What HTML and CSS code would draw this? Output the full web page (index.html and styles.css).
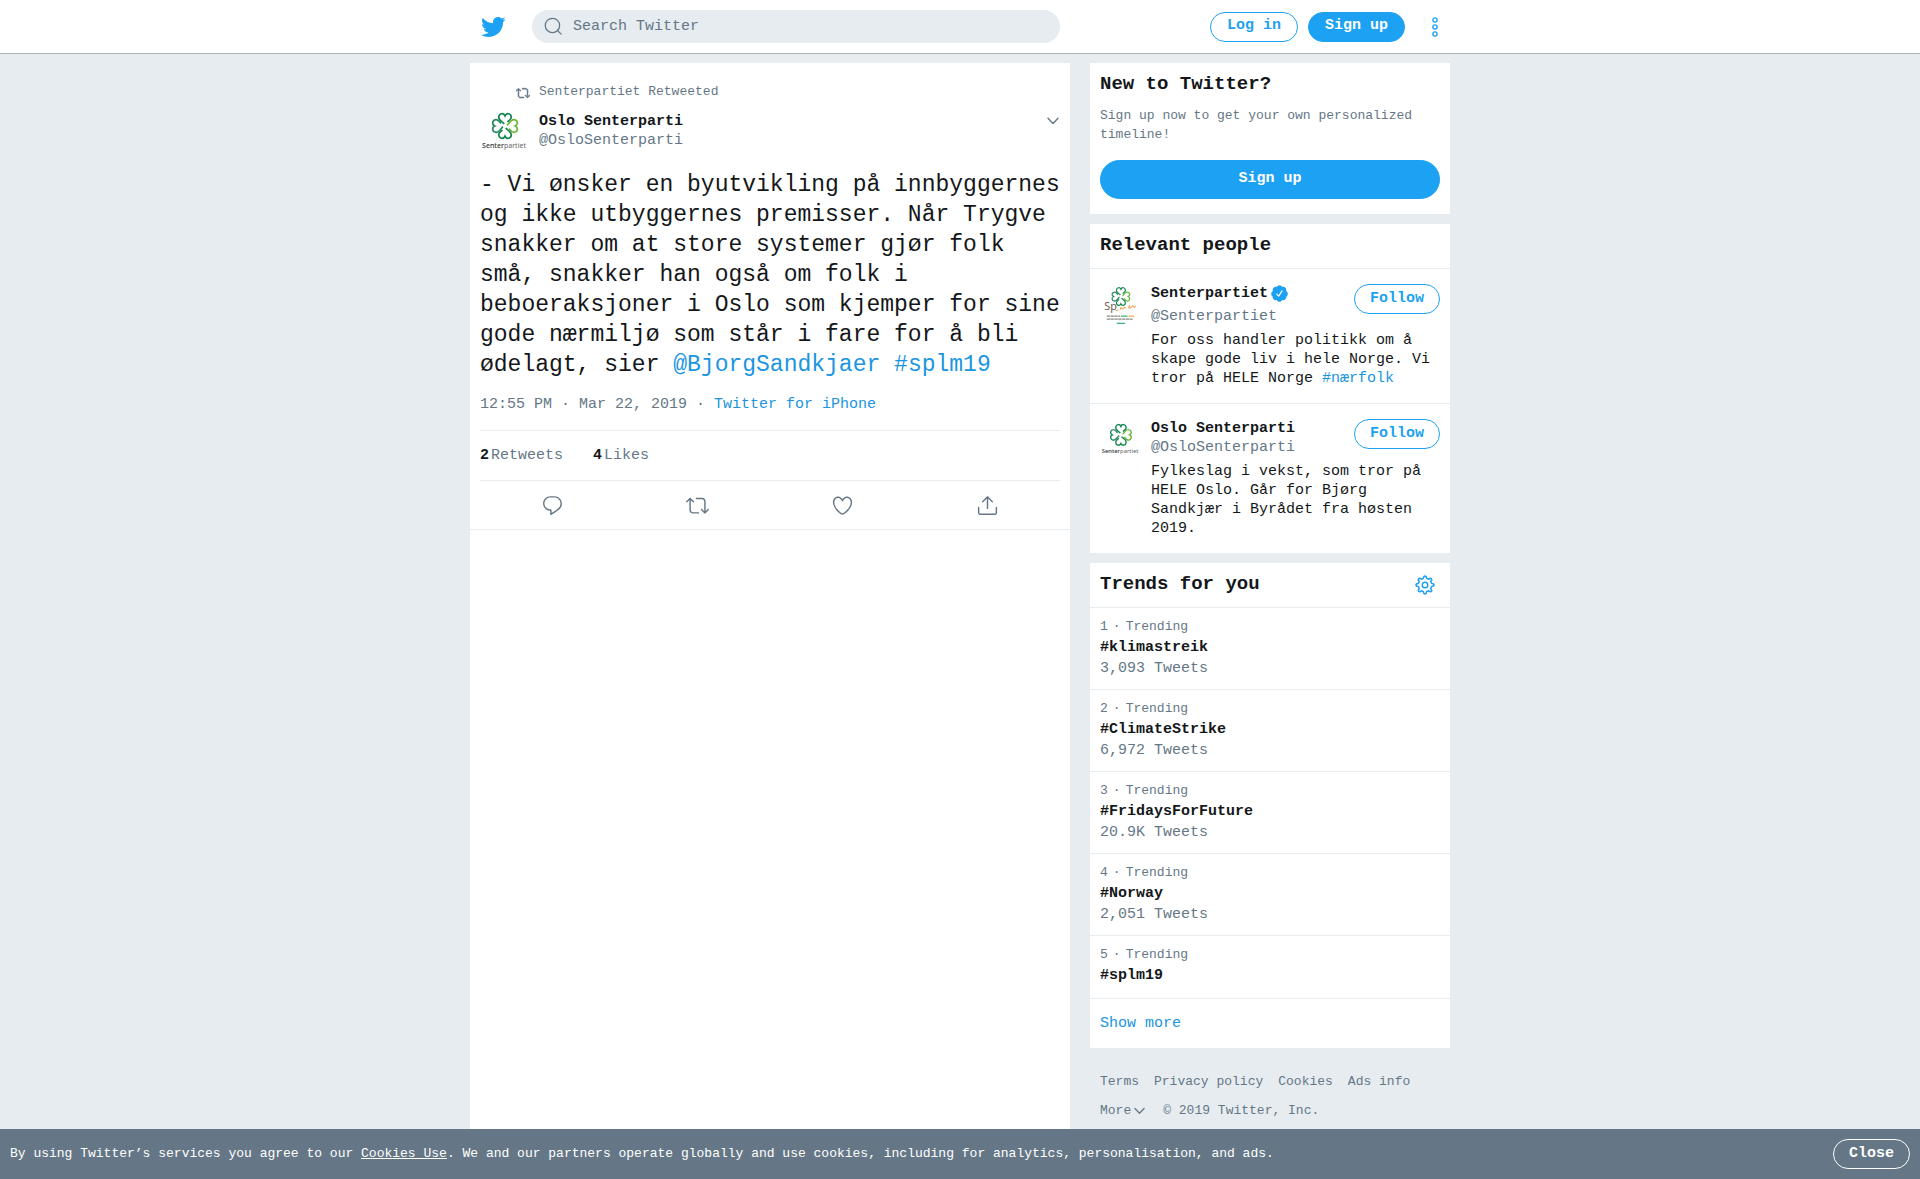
FILE: index.html
```html
<!DOCTYPE html>
<html lang="en">
<head>
<meta charset="utf-8">
<meta name="viewport" content="width=device-width, initial-scale=1">
<title>Oslo Senterparti on Twitter</title>
<link rel="stylesheet" href="styles.css">
</head>
<body>
<svg class="sprite" aria-hidden="true">
  <symbol id="clover" viewBox="-14 -14 28 28">
    <g fill="none" stroke-width="1.700">
      <path stroke="#0f8350" d="M-.8-2C-2-4-6.500-5.500-6.300-8.800C-6-12.800-1.500-13.600 0-10.200C1.500-13.600 6-12.800 6.300-8.800C6.400-6.500 3.500-5 2.500-4"/>
      <path stroke="#6cb83a" transform="rotate(90)" d="M-.8-2C-2-4-6.500-5.500-6.300-8.800C-6-12.800-1.500-13.600 0-10.200C1.500-13.600 6-12.800 6.300-8.800C6.400-6.500 3.500-5 2.500-4"/>
      <path stroke="#14884a" transform="rotate(180)" d="M-.8-2C-2-4-6.500-5.500-6.300-8.800C-6-12.800-1.500-13.600 0-10.200C1.500-13.600 6-12.800 6.300-8.800C6.400-6.500 3.500-5 2.500-4"/>
      <path stroke="#2a8a62" transform="rotate(270)" d="M-.8-2C-2-4-6.500-5.500-6.300-8.800C-6-12.800-1.500-13.600 0-10.200C1.500-13.600 6-12.800 6.300-8.800C6.400-6.500 3.500-5 2.500-4"/>
    </g>
  </symbol>
  <symbol id="retweet" viewBox="0 0 24 24">
    <path d="M23.77 15.67c-.292-.293-.767-.293-1.06 0l-2.22 2.22V7.65c0-2.068-1.683-3.75-3.75-3.75h-5.85c-.414 0-.75.336-.75.75s.336.75.75.75h5.85c1.24 0 2.25 1.01 2.25 2.25v10.24l-2.22-2.22c-.293-.293-.768-.293-1.06 0s-.294.768 0 1.06l3.5 3.5c.145.147.337.22.53.22s.383-.072.53-.22l3.5-3.5c.294-.292.294-.767 0-1.06zm-10.66 3.28H7.26c-1.24 0-2.25-1.01-2.25-2.25V6.46l2.22 2.22c.148.147.34.22.532.22s.384-.073.53-.22c.293-.293.293-.768 0-1.06l-3.5-3.5c-.293-.294-.768-.294-1.06 0l-3.5 3.5c-.294.292-.294.767 0 1.06s.767.293 1.06 0l2.22-2.22V16.7c0 2.068 1.683 3.75 3.75 3.75h5.85c.414 0 .75-.336.75-.75s-.337-.75-.75-.75z"/>
  </symbol>
  <symbol id="chevron" viewBox="0 0 12 8">
    <path d="M1 1.200l5 5.200l5-5.200" fill="none" stroke="currentColor" stroke-width="1.400" stroke-linecap="round" stroke-linejoin="round"/>
  </symbol>
</svg>

<header class="topbar">
  <div class="topbar-inner">
    <a class="logo" href="#" aria-label="Twitter">
      <svg class="bird" viewBox="0 0 24 24"><path d="M23.643 4.937c-.835.37-1.732.62-2.675.733.962-.576 1.7-1.49 2.048-2.578-.9.534-1.897.922-2.958 1.13-.85-.904-2.06-1.47-3.4-1.47-2.572 0-4.658 2.086-4.658 4.66 0 .364.042.718.12 1.06-3.873-.195-7.304-2.05-9.602-4.868-.4.69-.63 1.49-.63 2.342 0 1.616.823 3.043 2.072 3.878-.764-.025-1.482-.234-2.11-.583v.06c0 2.257 1.605 4.14 3.737 4.568-.392.106-.803.162-1.227.162-.3 0-.593-.028-.877-.082.593 1.85 2.313 3.198 4.352 3.234-1.595 1.25-3.604 1.995-5.786 1.995-.376 0-.747-.022-1.112-.065 2.062 1.323 4.51 2.093 7.14 2.093 8.57 0 13.255-7.098 13.255-13.254 0-.2-.005-.402-.014-.602.91-.658 1.7-1.477 2.323-2.41z"/></svg>
    </a>
    <form class="search" role="search">
      <label for="q" aria-label="Search">
        <svg class="icon-search" viewBox="0 0 18 18"><circle cx="8" cy="8" r="6.800"/><path d="M12.600 12.600l3.600 3.600"/></svg>
      </label>
      <input id="q" type="text" placeholder="Search Twitter">
    </form>
    <div class="session">
      <button class="btn" type="button">Log in</button>
      <button class="btn btn-solid" type="button">Sign up</button>
      <button class="btn-icon" type="button" aria-label="More options">
        <svg class="icon-dots" viewBox="0 0 20 20"><circle cx="10" cy="3" r="2.100"/><circle cx="10" cy="10" r="2.100"/><circle cx="10" cy="17" r="2.100"/></svg>
      </button>
    </div>
  </div>
</header>

<div class="page">
  <main class="primary">
    <article class="tweet">
      <div class="context"><svg class="icon-context"><use href="#retweet"/></svg><span>Senterpartiet Retweeted</span></div>
      <div class="author">
        <svg class="avatar-large" viewBox="0 0 49 49" role="img" aria-label="Oslo Senterparti">
          <use href="#clover" x="11" y="5" width="28" height="28"/>
          <text class="avatar-text" x="24" y="41" text-anchor="middle"><tspan class="avatar-bold">Senter</tspan>partiet</text>
        </svg>
        <div class="names"><a class="name" href="#">Oslo Senterparti</a><a class="handle" href="#">@OsloSenterparti</a></div>
        <button class="btn-menu" type="button" aria-label="More"><svg class="icon-menu"><use href="#chevron"/></svg></button>
      </div>
      <p class="tweet-text">- Vi ønsker en byutvikling på innbyggernes og ikke utbyggernes premisser. Når Trygve snakker om at store systemer gjør folk små, snakker han også om folk i beboeraksjoner i Oslo som kjemper for sine gode nærmiljø som står i fare for å bli ødelagt, sier <a href="#">@BjorgSandkjaer</a> <a href="#">#splm19</a></p>
      <p class="date">12:55 PM · Mar 22, 2019 · <a href="#">Twitter for iPhone</a></p>
      <div class="stats">
        <a class="stat" href="#"><strong>2</strong><span>Retweets</span></a>
        <a class="stat" href="#"><strong>4</strong><span>Likes</span></a>
      </div>
      <div class="actions">
        <button type="button" aria-label="Reply"><svg viewBox="0 0 24 24"><path d="M14.046 2.242l-4.148-.01h-.002c-4.374 0-7.8 3.427-7.8 7.802 0 4.098 3.186 7.206 7.465 7.37v3.828c0 .108.044.286.12.403.142.225.384.347.632.347.138 0 .277-.038.402-.118.264-.168 6.473-4.14 8.088-5.506 1.902-1.61 3.04-3.97 3.043-6.312v-.017c-.006-4.367-3.43-7.787-7.8-7.788zm3.787 12.972c-1.134.96-4.862 3.405-6.772 4.643V16.67c0-.414-.335-.75-.75-.75h-.396c-3.66 0-6.318-2.476-6.318-5.886 0-3.534 2.768-6.302 6.3-6.302l4.147.01h.002c3.532 0 6.3 2.766 6.302 6.296-.003 1.91-.942 3.844-2.514 5.176z"/></svg></button>
        <button type="button" aria-label="Retweet"><svg><use href="#retweet"/></svg></button>
        <button type="button" aria-label="Like"><svg viewBox="0 0 24 24"><path d="M12 21.638h-.014C9.403 21.59 1.95 14.856 1.95 8.478c0-3.064 2.525-5.754 5.403-5.754 2.29 0 3.83 1.58 4.646 2.73.814-1.148 2.354-2.73 4.645-2.73 2.88 0 5.404 2.69 5.404 5.755 0 6.376-7.454 13.11-10.037 13.157H12zM7.354 4.225c-2.08 0-3.903 1.988-3.903 4.255 0 5.74 7.034 11.596 8.55 11.658 1.518-.062 8.55-5.917 8.55-11.658 0-2.267-1.823-4.255-3.903-4.255-2.528 0-3.94 2.936-3.952 2.965-.23.562-1.156.562-1.387 0-.014-.03-1.425-2.965-3.954-2.965z"/></svg></button>
        <button type="button" aria-label="Share"><svg viewBox="0 0 24 24"><path d="M17.53 7.47l-5-5c-.293-.293-.768-.293-1.06 0l-5 5c-.294.293-.294.768 0 1.06s.767.294 1.06 0l3.72-3.72V15c0 .414.336.75.75.75s.75-.336.75-.75V4.81l3.72 3.72c.146.147.338.22.53.22s.384-.072.53-.22c.293-.293.293-.767 0-1.06z"/><path d="M19.708 21.944H4.292C3.028 21.944 2 20.916 2 19.652V14c0-.414.336-.75.75-.75s.75.336.75.75v5.652c0 .437.355.792.792.792h15.416c.437 0 .792-.355.792-.792V14c0-.414.336-.75.75-.75s.75.336.75.75v5.652c0 1.264-1.028 2.292-2.292 2.292z"/></svg></button>
      </div>
    </article>
  </main>

  <aside class="sidebar">
    <section class="card signup">
      <h2>New to Twitter?</h2>
      <p>Sign up now to get your own personalized timeline!</p>
      <button class="btn btn-solid btn-large" type="button">Sign up</button>
    </section>

    <section class="card">
      <div class="card-head"><h2>Relevant people</h2></div>
      <div class="person">
        <svg class="avatar" viewBox="0 0 49 49" role="img" aria-label="Senterpartiet">
          <use href="#clover" x="13" y="3" width="24" height="24"/>
          <text class="avatar-sp" x="5" y="31">Sp</text>
          <path d="M19 32l3-1m2 0l1-3l2 2l2-2l2 1m3 0l1-3l1 3l3-3l2 2l2-2" fill="none" stroke="#f2a65c" stroke-width="1.200"/>
          <path d="M8 38.500h16M8 42h31" fill="none" stroke="#8d8a86" stroke-width="1.500" stroke-dasharray="4 .600"/>
          <path d="M25 38.500h8M20 47h10" fill="none" stroke="#3fae82" stroke-width="1.500"/>
          <path d="M34 38.500h7" fill="none" stroke="#f0b05a" stroke-width="1.500"/>
        </svg>
        <div class="person-body">
          <div class="person-head">
            <div class="names">
              <a class="name name-verified" href="#">Senterpartiet<svg class="badge" viewBox="0 0 24 24" role="img" aria-label="Verified account"><path d="M22.500 12.500c0-1.580-.875-2.950-2.148-3.600.154-.435.238-.905.238-1.400 0-2.210-1.710-3.998-3.818-3.998-.470 0-.920.084-1.336.250C14.818 2.415 13.510 1.500 12 1.500s-2.816.917-3.437 2.250c-.415-.165-.866-.250-1.336-.250-2.110 0-3.818 1.790-3.818 4 0 .494.083.964.237 1.400-1.272.650-2.147 2.018-2.147 3.600 0 1.495.782 2.798 1.942 3.486-.020.170-.032.340-.032.514 0 2.210 1.708 4 3.818 4 .470 0 .920-.086 1.335-.250.620 1.334 1.926 2.250 3.437 2.250 1.512 0 2.818-.916 3.437-2.250.415.163.865.248 1.336.248 2.110 0 3.818-1.790 3.818-4 0-.174-.012-.344-.033-.513 1.158-.687 1.943-1.990 1.943-3.484zm-6.616-3.334l-4.334 6.500c-.145.217-.382.334-.625.334-.143 0-.288-.040-.416-.126l-.115-.094-2.415-2.415c-.293-.293-.293-.768 0-1.060s.768-.294 1.060 0l1.770 1.767 3.825-5.740c.230-.345.696-.436 1.040-.207.346.230.440.696.210 1.040z"/></svg></a>
              <a class="handle" href="#">@Senterpartiet</a>
            </div>
            <button class="btn btn-small" type="button">Follow</button>
          </div>
          <p>For oss handler politikk om å skape gode liv i hele Norge. Vi tror på HELE Norge <a href="#">#nærfolk</a></p>
        </div>
      </div>
      <div class="person">
        <svg class="avatar" viewBox="0 0 49 49" role="img" aria-label="Oslo Senterparti">
          <use href="#clover" x="11" y="5" width="28" height="28"/>
          <text class="avatar-text" x="24" y="41" text-anchor="middle"><tspan class="avatar-bold">Senter</tspan>partiet</text>
        </svg>
        <div class="person-body">
          <div class="person-head">
            <div class="names"><a class="name" href="#">Oslo Senterparti</a><a class="handle" href="#">@OsloSenterparti</a></div>
            <button class="btn btn-small" type="button">Follow</button>
          </div>
          <p>Fylkeslag i vekst, som tror på HELE Oslo. Går for Bjørg Sandkjær i Byrådet fra høsten 2019.</p>
        </div>
      </div>
    </section>

    <section class="card">
      <div class="card-head">
        <h2>Trends for you</h2>
        <button class="btn-icon" type="button" aria-label="Settings">
          <svg class="icon-gear" viewBox="-12 -12 24 24"><path d="M-1.800-8C-1.700-10.500-1-10.800 0-10.800S1.700-10.500 1.800-8L4.400-6.900C6.200-8.600 6.900-8.300 7.600-7.600S8.600-6.200 6.900-4.400L8-1.800C10.500-1.700 10.800-1 10.800 0S10.500 1.700 8 1.800L6.900 4.400C8.600 6.200 8.300 6.900 7.600 7.600S6.200 8.600 4.400 6.900L1.800 8C1.700 10.500 1 10.800 0 10.800S-1.700 10.500-1.800 8L-4.400 6.900C-6.200 8.600-6.900 8.300-7.600 7.600S-8.600 6.200-6.900 4.400L-8 1.800C-10.500 1.700-10.800 1-10.800 0S-10.500-1.700-8-1.800L-6.900-4.400C-8.600-6.200-8.300-6.900-7.600-7.600S-6.200-8.600-4.400-6.900Z"/><circle r="3.300"/></svg>
        </button>
      </div>
      <a class="trend" href="#"><span class="trend-meta"><span>1</span><span>·</span><span>Trending</span></span><strong>#klimastreik</strong><span>3,093 Tweets</span></a>
      <a class="trend" href="#"><span class="trend-meta"><span>2</span><span>·</span><span>Trending</span></span><strong>#ClimateStrike</strong><span>6,972 Tweets</span></a>
      <a class="trend" href="#"><span class="trend-meta"><span>3</span><span>·</span><span>Trending</span></span><strong>#FridaysForFuture</strong><span>20.9K Tweets</span></a>
      <a class="trend" href="#"><span class="trend-meta"><span>4</span><span>·</span><span>Trending</span></span><strong>#Norway</strong><span>2,051 Tweets</span></a>
      <a class="trend" href="#"><span class="trend-meta"><span>5</span><span>·</span><span>Trending</span></span><strong>#splm19</strong></a>
      <a class="show-more" href="#">Show more</a>
    </section>

    <nav class="links" aria-label="Footer">
      <a href="#">Terms</a>
      <a href="#">Privacy policy</a>
      <a href="#">Cookies</a>
      <a href="#">Ads info</a>
      <button type="button">More<svg class="icon-more"><use href="#chevron"/></svg></button>
      <span>© 2019 Twitter, Inc.</span>
    </nav>
  </aside>
</div>

<div class="cookie-bar">
  <p>By using Twitter’s services you agree to our <a href="#">Cookies Use</a>. We and our partners operate globally and use cookies, including for analytics, personalisation, and ads.</p>
  <button class="btn btn-small btn-light" type="button">Close</button>
</div>
</body>
</html>
```

FILE: styles.css
```css
:root {
  --blue: #1da1f2;
  --link: #1b95e0;
  --ink: #14171a;
  --muted: #657786;
  --line: #e6ecf0;
}

* { box-sizing: border-box; }

body {
  margin: 0;
  min-height: 100vh;
  display: flex;
  flex-direction: column;
  background: var(--line);
  color: var(--ink);
  font: 15px/19px "Liberation Mono", monospace;
}

a { color: var(--link); text-decoration: none; }
p, h2 { margin: 0; }
h2 { font-size: 19px; line-height: 22px; }
button { font: inherit; color: inherit; background: none; border: 0; padding: 0; cursor: pointer; }
svg { display: block; flex-shrink: 0; fill: currentColor; }

.sprite { width: 0; height: 0; position: absolute; }

/* Buttons */
.btn {
  flex-shrink: 0;
  padding: 3px 16px 6px;
  border: 1px solid var(--blue);
  border-radius: 20px;
  color: var(--blue);
  font-weight: bold;
}
.btn-small { padding: 4px 15px 5px; }
.btn-solid { background: var(--blue); color: #fff; }
.btn-large { padding: 8px 16px 10px; }
.btn-light { border-color: #fff; color: #fff; }
.btn-icon { color: var(--blue); }

/* Top bar */
.topbar {
  position: sticky;
  top: 0;
  z-index: 1;
  background: #fff;
  border-bottom: 1px solid #aab3b9;
}
.topbar-inner {
  display: flex;
  align-items: center;
  width: 100%;
  max-width: 980px;
  height: 53px;
  margin: 0 auto;
  padding: 0 5px 0 10px;
}
.logo { color: var(--blue); margin-right: 26px; }
.bird { width: 26px; height: 26px; }
.search {
  flex: 0 1 528px;
  display: flex;
  align-items: center;
  gap: 10px;
  height: 33px;
  padding: 0 12px;
  border-radius: 17px;
  background: var(--line);
  color: var(--muted);
}
.icon-search { width: 19px; height: 19px; fill: none; stroke: currentColor; stroke-width: 1.2; stroke-linecap: round; }
.search input {
  flex: 1;
  min-width: 0;
  padding: 0;
  border: 0;
  outline: 0;
  background: none;
  color: inherit;
  font: inherit;
}
.search input::placeholder { color: var(--muted); opacity: 1; }
.session { display: flex; align-items: center; gap: 10px; margin-left: auto; }
.session .btn-icon { margin-left: 10px; }
.icon-dots { width: 20px; height: 20px; fill: none; stroke: currentColor; stroke-width: 1.4; }

/* Page grid */
.page {
  flex: 1;
  display: grid;
  grid-template-columns: minmax(0, 600px) minmax(0, 360px);
  gap: 20px;
  width: 100%;
  max-width: 980px;
  margin: 0 auto;
  padding-top: 9px;
}
.primary { background: #fff; }

/* Tweet */
.tweet { padding: 20px 10px 0; border-bottom: 1px solid var(--line); }
.context {
  display: flex;
  align-items: center;
  gap: 9px;
  padding-left: 36px;
  color: var(--muted);
  font-size: 13px;
  line-height: 17px;
}
.icon-context { width: 14px; height: 14px; margin-top: 2px; stroke: currentColor; stroke-width: 1; }
.author { display: flex; gap: 10px; margin-top: 7px; }
.author .names { flex: 1; padding-top: 5px; }
.avatar-large { width: 49px; height: 49px; }
.avatar { width: 41px; height: 41px; }
.avatar-text { font: 7px "Noto Sans", sans-serif; fill: #666; }
.avatar-bold { font-weight: 500; fill: #333; }
.avatar-sp { font: 13px "Noto Sans", sans-serif; fill: #6b5d55; }
.names { display: flex; flex-direction: column; align-items: flex-start; min-width: 0; }
.name { color: var(--ink); font-weight: bold; }
.name-verified { display: flex; gap: 2px; height: 23px; }
.badge { width: 19px; height: 19px; color: var(--blue); }
.handle { color: var(--muted); }
.btn-menu { align-self: flex-start; padding: 10px 1px; color: var(--muted); }
.icon-menu { width: 12px; height: 8px; }
.tweet-text { margin-top: 14px; font-size: 23px; line-height: 30px; }
.date { margin-top: 15px; color: var(--muted); }
.stats {
  display: flex;
  gap: 30px;
  margin-top: 16px;
  padding: 15px 0;
  border: solid var(--line);
  border-width: 1px 0;
}
.stat { display: flex; gap: 2px; color: var(--muted); }
.stat strong { color: var(--ink); }
.actions { display: grid; grid-template-columns: repeat(4, 1fr); padding: 13px 0 12px; color: var(--muted); }
.actions button { justify-self: center; }
.actions svg { width: 23px; height: 23px; }

/* Sidebar */
.sidebar { display: flex; flex-direction: column; gap: 10px; }
.card { background: #fff; }
.card-head {
  display: flex;
  justify-content: space-between;
  align-items: flex-start;
  padding: 10px 10px 12px;
}
.card-head .btn-icon { padding: 2px 5px 0; height: 22px; }
.icon-gear { width: 20px; height: 20px; fill: none; stroke: currentColor; stroke-width: 1.8; stroke-linejoin: round; }
.signup { display: flex; flex-direction: column; padding: 10px 10px 15px; }
.signup p { margin: 11px 0 16px; color: var(--muted); font-size: 13px; }
.person { display: flex; gap: 10px; padding: 15px 10px; border-top: 1px solid var(--line); }
.person-body { flex: 1; min-width: 0; }
.person-head { display: flex; justify-content: space-between; align-items: flex-start; margin-bottom: 5px; }
.trend {
  display: flex;
  flex-direction: column;
  gap: 2px;
  padding: 9px 10px 11px;
  border-top: 1px solid var(--line);
  color: var(--muted);
}
.trend strong { color: var(--ink); }
.trend:nth-last-child(2) { padding-bottom: 13px; }
.trend-meta { display: flex; gap: 5px; font-size: 13px; }
.show-more { display: block; padding: 15px 10px; border-top: 1px solid var(--line); }

.links {
  display: flex;
  flex-wrap: wrap;
  gap: 10px 15px;
  padding: 14px 10px;
  color: var(--muted);
  font-size: 13px;
}
.links a { color: inherit; }
.links button { display: flex; align-items: center; gap: 3px; padding-right: 3px; }
.icon-more { width: 11px; height: 8px; }

/* Cookie notice */
.cookie-bar {
  position: fixed;
  right: 0;
  bottom: 0;
  left: 0;
  z-index: 2;
  display: flex;
  align-items: center;
  justify-content: space-between;
  gap: 20px;
  padding: 10px;
  background: var(--muted);
  color: #fff;
  font-size: 13px;
}
.cookie-bar p { padding-bottom: 2px; }
.cookie-bar a { color: inherit; text-decoration: underline; }
.cookie-bar .btn { font-size: 15px; }
```
